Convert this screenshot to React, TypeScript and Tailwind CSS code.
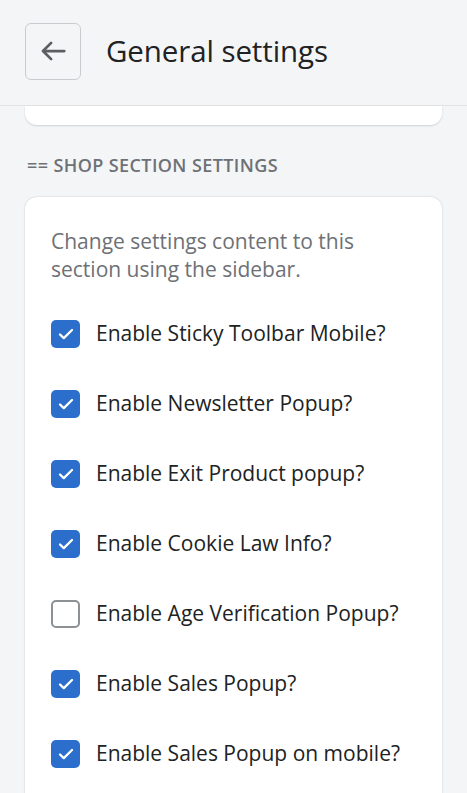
import React from "react";

const items: { label: string; checked: boolean }[] = [
  { label: "Enable Sticky Toolbar Mobile?", checked: true },
  { label: "Enable Newsletter Popup?", checked: true },
  { label: "Enable Exit Product popup?", checked: true },
  { label: "Enable Cookie Law Info?", checked: true },
  { label: "Enable Age Verification Popup?", checked: false },
  { label: "Enable Sales Popup?", checked: true },
  { label: "Enable Sales Popup on mobile?", checked: true },
];

function Box({ checked }: { checked: boolean }) {
  if (checked) {
    return (
      <span className="flex h-[28px] w-[29px] shrink-0 items-center justify-center rounded-[5px] bg-[#2c6ecb]">
        <svg width="18" height="18" viewBox="0 0 18 18" fill="none">
          <path d="M3 9.5l3.8 3.6L15 5" stroke="white" strokeWidth="2.3" strokeLinecap="round" strokeLinejoin="round" />
        </svg>
      </span>
    );
  }
  return <span className="h-[28px] w-[29px] shrink-0 rounded-[5px] border-2 border-[#8c9196] bg-white" />;
}

export default function App() {
  return (
    <div className="h-[793px] w-[467px] overflow-hidden bg-[#f4f5f7]" style={{ fontFamily: '"Open Sans", "Noto Sans", sans-serif' }}>
      <header className="flex h-[106px] items-center gap-[25px] border-b border-[#e1e3e5] px-[25px] pb-[3px]">
        <button className="flex h-[57px] w-[56px] shrink-0 items-center justify-center rounded-[6px] border border-[#c9cccf] bg-[#f4f5f7]">
          <svg width="30" height="30" viewBox="0 0 24 24" fill="none">
            <path d="M21 12H4.5M10.5 5.5L4 12l6.5 6.5" stroke="#5c5f62" strokeWidth="2.2" strokeLinecap="round" strokeLinejoin="round" />
          </svg>
        </button>
        <h1 className="text-[29.5px] font-normal tracking-[-0.1px] text-[#202223]">General settings</h1>
      </header>
      <div className="px-[25px]">
        <div className="h-[19px] rounded-b-[12px] bg-white shadow-[0_1px_2px_rgba(0,0,0,0.15)]" />
        <div className="mt-[28px] mb-[20px] px-[2px] text-[18px] leading-[24px] font-semibold uppercase tracking-[0.4px] text-[#6d7175]">== Shop section settings</div>
        <div className="rounded-[12px] bg-white px-[26px] pt-[30px] pb-[40px] shadow-[0_0_2px_rgba(0,0,0,0.2)]">
          <p className="max-w-[330px] text-[21px] leading-[28px] text-[#6d7175]">Change settings content to this section using the sidebar.</p>
          <div className="mt-[16px] flex flex-col">
            {items.map((it) => (
              <label key={it.label} className="flex h-[70px] items-center gap-[16px]">
                <Box checked={it.checked} />
                <span className="text-[21px] text-[#202223]">{it.label}</span>
              </label>
            ))}
          </div>
        </div>
      </div>
    </div>
  );
}
